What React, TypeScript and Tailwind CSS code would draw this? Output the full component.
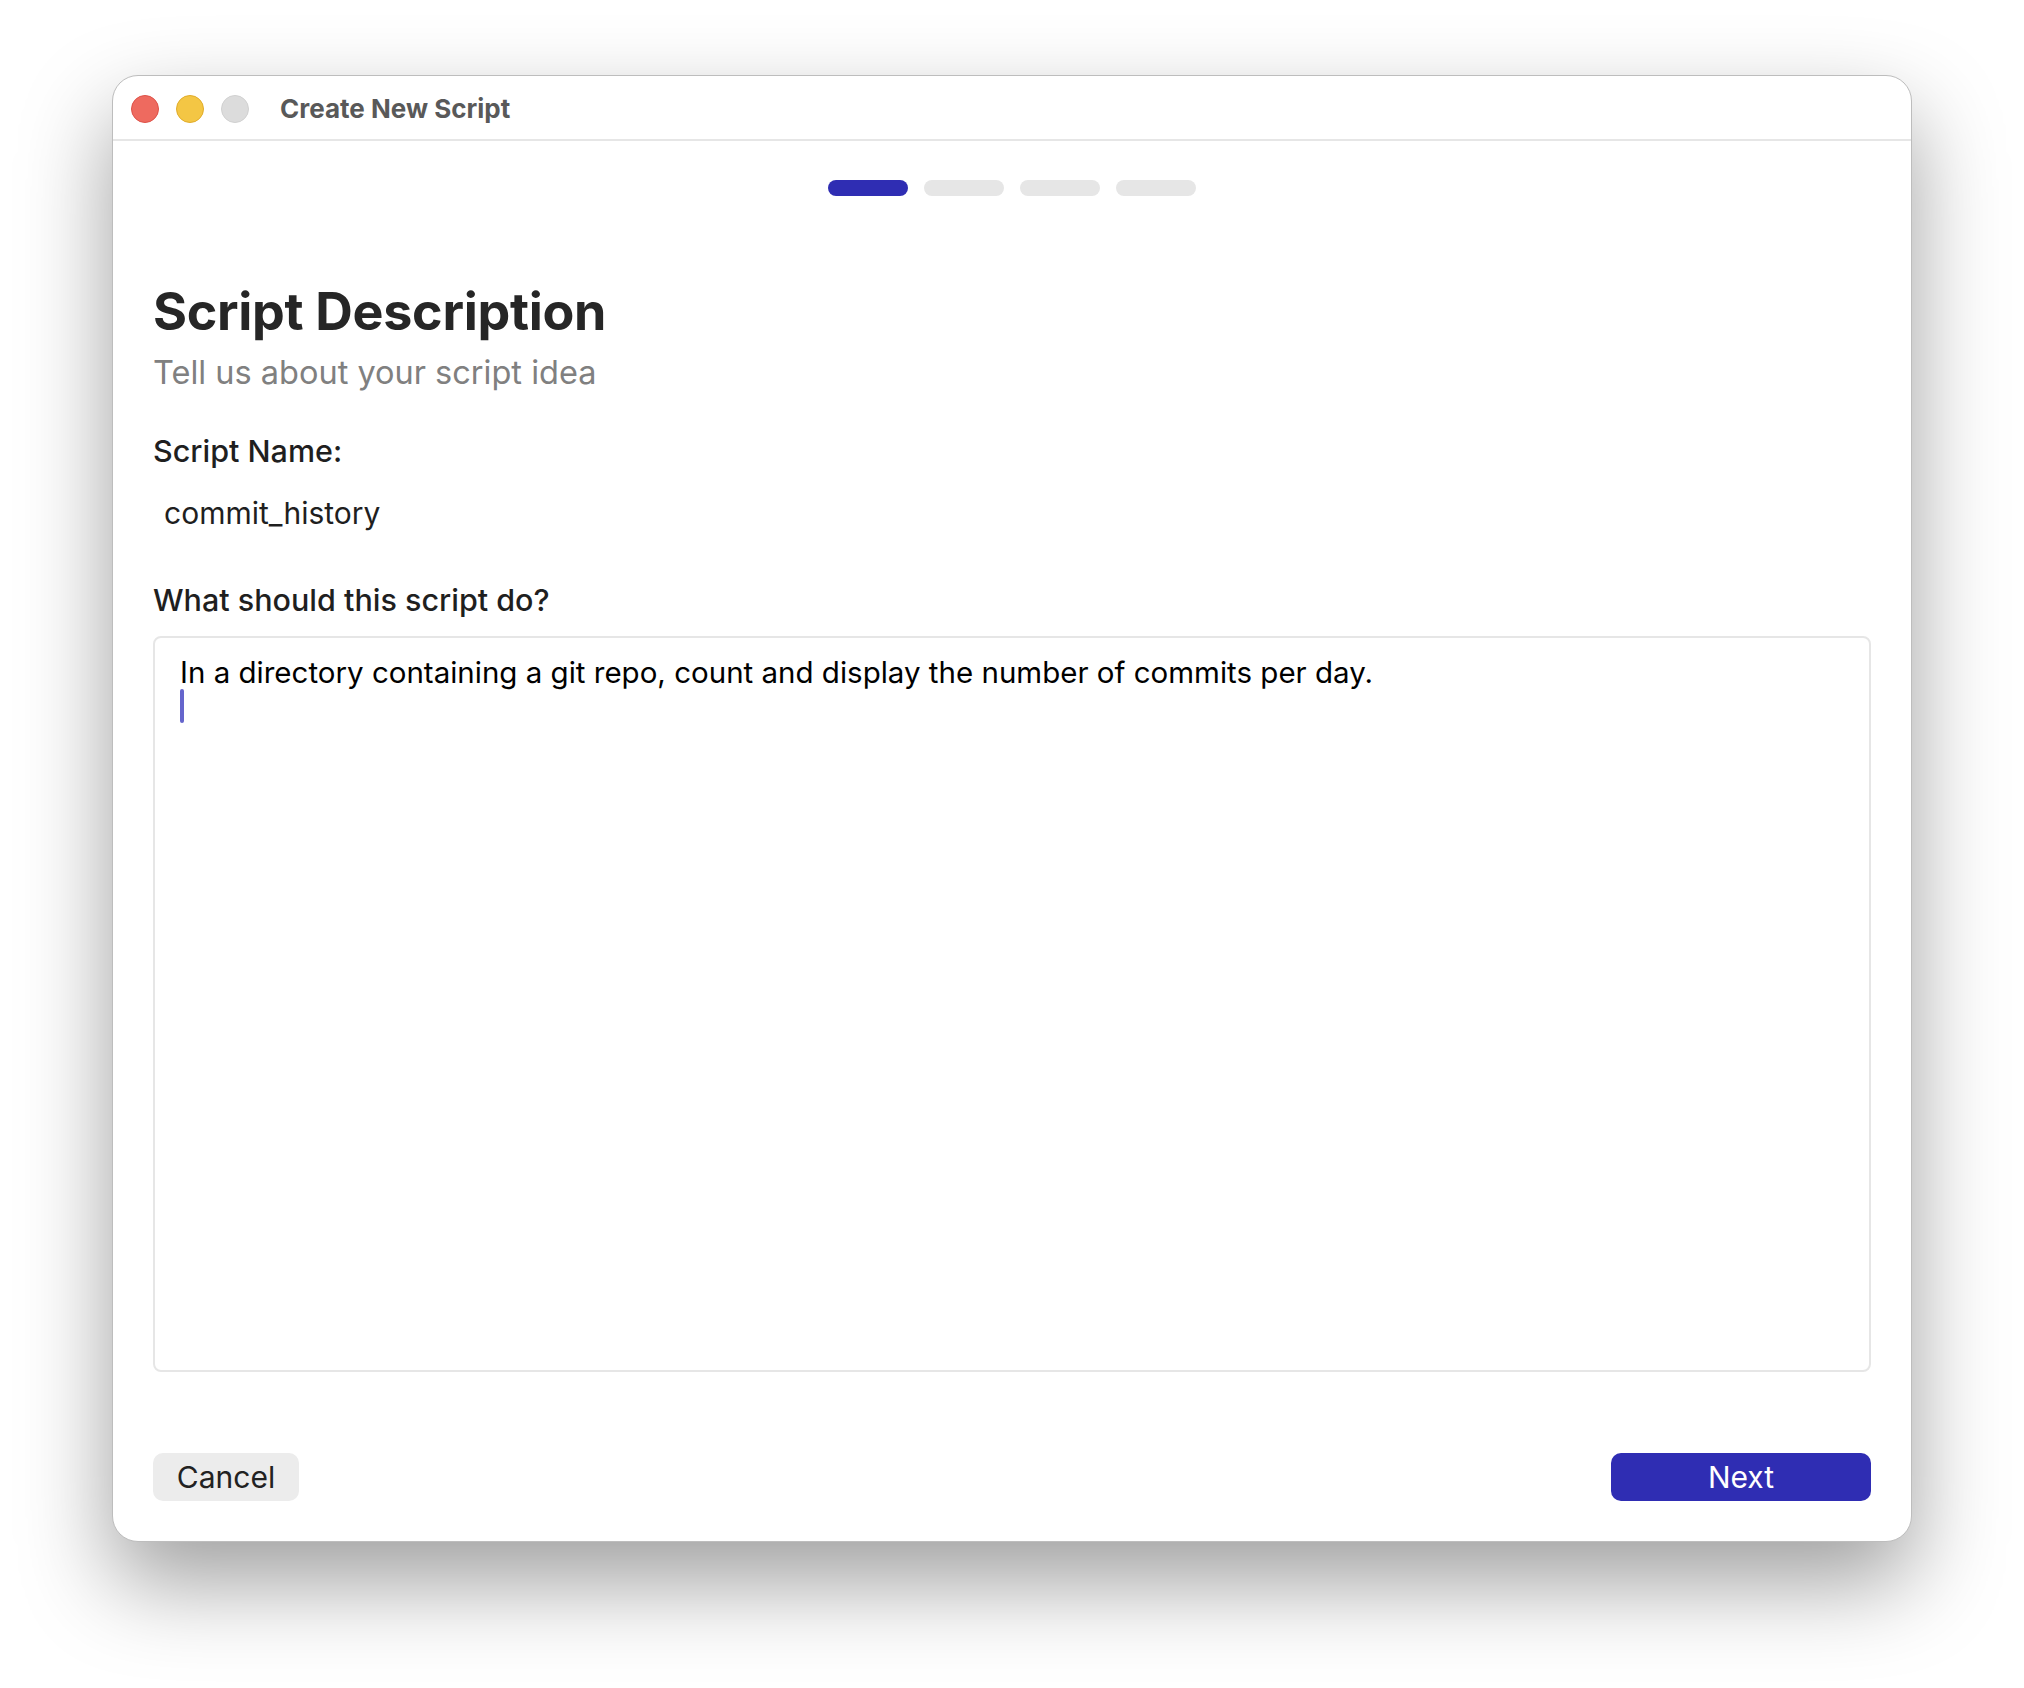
const steps = [true, false, false, false];

export default function App() {
  return (
    <div
      className="min-h-screen w-full bg-white flex justify-center pt-[75px]"
      style={{ fontFamily: "Inter, 'Noto Sans', sans-serif" }}
    >
      <div className="w-[1800px] h-[1467px] rounded-[26px] border border-[#bdbdbd] bg-white shadow-[0_40px_90px_rgba(0,0,0,0.38)] flex flex-col overflow-hidden">
        {/* Title bar */}
        <div className="h-[65px] shrink-0 flex items-center pl-[18px] pt-[2px] border-b-2 border-[#e6e6e6]">
          <div className="flex items-center gap-[17px]">
            <span className="h-[28px] w-[28px] rounded-full bg-[#ee6a5f] border border-[#dd5148]" />
            <span className="h-[28px] w-[28px] rounded-full bg-[#f4c644] border border-[#e0ac2a]" />
            <span className="h-[28px] w-[28px] rounded-full bg-[#dcdcdc] border border-[#d0d0d0]" />
          </div>
          <span className="ml-[31px] text-[26px] font-bold text-[#595959]">Create New Script</span>
        </div>

        {/* Content */}
        <div className="flex-1 flex flex-col px-[40px] pb-[40px]">
          <div className="mt-[39px] flex justify-center gap-[16px]">
            {steps.map((active, i) => (
              <div
                key={i}
                className={active ? "h-[16px] w-[80px] rounded-full bg-[#2f2db3]" : "h-[16px] w-[80px] rounded-full bg-[#e6e6e6]"}
              />
            ))}
          </div>

          <h1 className="mt-[86px] text-[52px] leading-[60px] font-bold text-[#262626] tracking-[-0.3px]">Script Description</h1>
          <p className="mt-[13px] text-[32.5px] leading-[36px] text-[#808080]">Tell us about your script idea</p>

          <label className="mt-[44px] text-[30.5px] leading-[32px] font-medium text-[#1f1f1f]">Script Name:</label>
          <div className="mt-[30px] pl-[11px] text-[30px] leading-[32px] text-[#1f1f1f]">commit_history</div>

          <label className="mt-[55px] text-[30.5px] leading-[32px] font-medium text-[#1f1f1f]">What should this script do?</label>

          <div className="mt-[20px] h-[736px] rounded-[8px] border-2 border-[#e6e6e6] px-[25px] pt-[18px]">
            <p className="text-[29.5px] leading-[32px] text-black">
              In a directory containing a git repo, count and display the number of commits per day.
            </p>
            <div className="mt-[1px] h-[34px] w-[4px] rounded-full bg-[#6565cc]" />
          </div>

          <div className="mt-auto flex items-center justify-between">
            <button className="h-[48px] w-[146px] rounded-[10px] bg-[#ececec] text-[30px] text-[#222]">
              Cancel
            </button>
            <button className="h-[48px] w-[260px] rounded-[10px] bg-[#2f2db3] text-[30px] text-white">
              Next
            </button>
          </div>
        </div>
      </div>
    </div>
  );
}
